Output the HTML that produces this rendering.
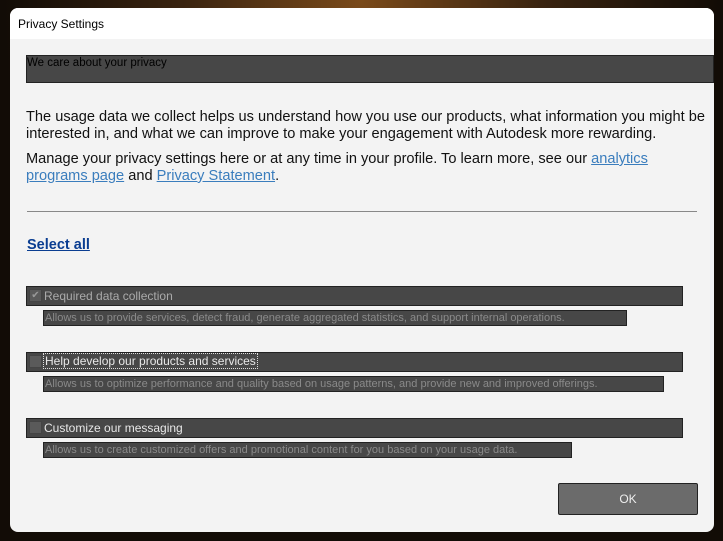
<!DOCTYPE html>
<html><head><meta charset="utf-8"><style>
*{margin:0;padding:0;box-sizing:border-box}
body{width:723px;height:541px;overflow:hidden;position:relative;font-family:"Liberation Sans",Arial,sans-serif;
background:radial-gradient(ellipse at 50% 0%,#7a4a1a 0%,#3a2410 35%,#120c06 70%);}
.dlg{position:absolute;left:10px;top:8px;width:704px;height:524px;background:#f3f3f3;border-radius:8px;overflow:hidden}
.tb{position:absolute;left:0;top:0;width:100%;height:31px;background:#fff;font-size:12px;color:#000;padding:9px 0 0 8px}
.abs{position:absolute}
.hdr{left:16px;top:47px;width:688px;height:28px;background:#474747;border:1px solid #222;font-size:11.5px;color:#000;padding:1px 0 0 0}
.p{left:16px;font-size:14.6px;color:#111;line-height:17px;width:692px}
a{color:#3a7dbd;text-decoration:underline}
.hr{left:17px;top:203px;width:670px;height:1px;background:#888}
.sel{left:17px;top:229px;font-size:14.5px;font-weight:bold;color:#0a3d91;text-decoration:underline}
.bar{left:16px;width:657px;height:20px;background:#474747;border:1px solid #222}
.cb{position:absolute;left:2px;top:2px;width:13px;height:13px;background:#5a5a5a;border:1px solid #444}
.lbl{position:absolute;left:17px;top:2px;font-size:12px;color:#e8e8e8}
.desc{left:33px;height:16px;background:#474747;border:1px solid #222;font-size:11px;color:#8a8a8a;padding:1px 0 0 1px;white-space:nowrap;overflow:hidden}
.ok{left:548px;top:475px;width:140px;height:32px;background:#6b6b6b;border:1px solid #222;border-radius:2px;color:#eee;font-size:12px;text-align:center;line-height:30px}
</style></head><body>
<div class="dlg">
<div class="tb">Privacy Settings</div>
<div class="abs hdr">We care about your privacy</div>
<div class="abs p" style="top:101px">The usage data we collect helps us understand how you use our products, what information you might be interested in, and what we can improve to make your engagement with Autodesk more rewarding.</div>
<div class="abs p" style="top:143px">Manage your privacy settings here or at any time in your profile. To learn more, see our <a>analytics </a><br><a>programs page</a> and <a>Privacy Statement</a>.</div>
<div class="abs hr"></div>
<div class="abs sel">Select all</div>
<div class="abs bar" style="top:278px"><div class="cb" style="color:#999;font-size:10px;line-height:11px;text-align:center">✔</div><div class="lbl" style="color:#aaa">Required data collection</div></div>
<div class="abs desc" style="top:302px;width:584px">Allows us to provide services, detect fraud, generate aggregated statistics, and support internal operations.</div>
<div class="abs bar" style="top:344px"><div class="cb"></div><div class="lbl" style="outline:1px dotted #ddd;padding:0 1px;top:1px">Help develop our products and services</div></div>
<div class="abs desc" style="top:368px;width:621px">Allows us to optimize performance and quality based on usage patterns, and provide new and improved offerings.</div>
<div class="abs bar" style="top:410px"><div class="cb"></div><div class="lbl">Customize our messaging</div></div>
<div class="abs desc" style="top:434px;width:529px">Allows us to create customized offers and promotional content for you based on your usage data.</div>
<div class="abs ok">OK</div>
</div>
</body></html>
